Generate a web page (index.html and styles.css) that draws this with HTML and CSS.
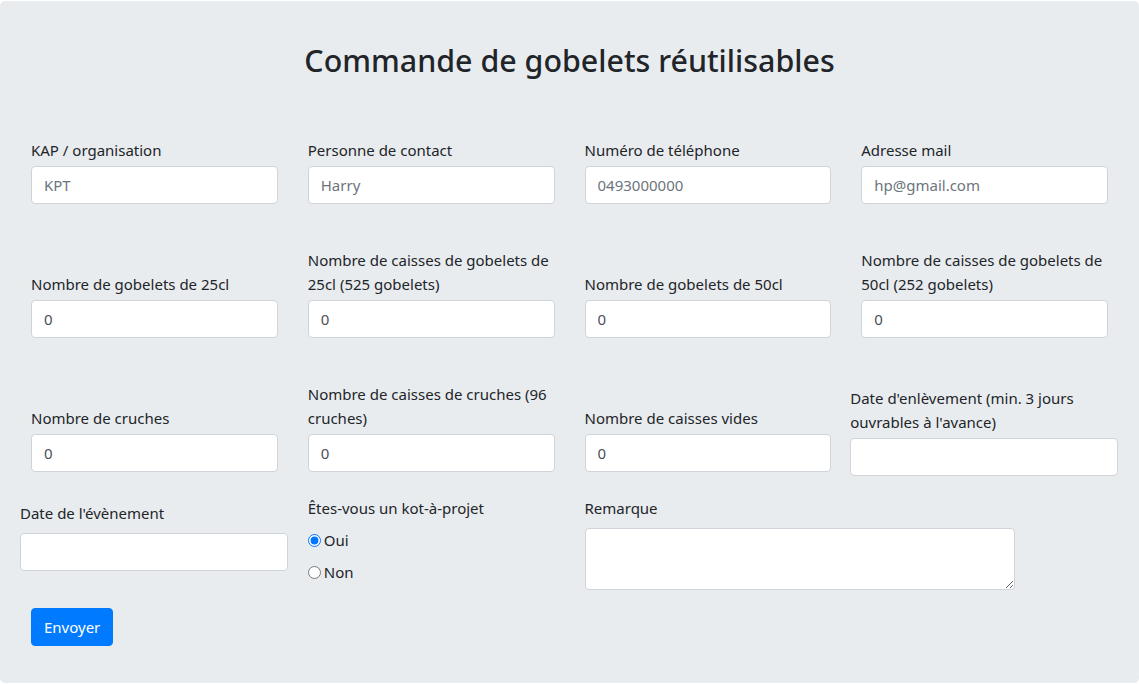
FILE: index.html
```html
<!DOCTYPE html>
<html lang="fr">
<head>
<meta charset="utf-8">
<title>Commande de gobelets réutilisables</title>
<link rel="stylesheet" href="styles.css">
</head>
<body>
<div class="jumbotron">
  <h2 class="title">Commande de gobelets réutilisables</h2>
  <form class="form">
    <div class="row row-first">
      <div class="col">
        <label class="lbl">KAP / organisation</label>
        <input class="ctrl" type="text" placeholder="KPT">
      </div>
      <div class="col">
        <label class="lbl">Personne de contact</label>
        <input class="ctrl" type="text" placeholder="Harry">
      </div>
      <div class="col">
        <label class="lbl">Numéro de téléphone</label>
        <input class="ctrl" type="text" placeholder="0493000000">
      </div>
      <div class="col">
        <label class="lbl">Adresse mail</label>
        <input class="ctrl" type="text" placeholder="hp@gmail.com">
      </div>
    </div>
    <div class="row">
      <div class="col">
        <label class="lbl">Nombre de gobelets de 25cl</label>
        <input class="ctrl" type="text" value="0">
      </div>
      <div class="col">
        <label class="lbl">Nombre de caisses de gobelets de 25cl (525 gobelets)</label>
        <input class="ctrl" type="text" value="0">
      </div>
      <div class="col">
        <label class="lbl">Nombre de gobelets de 50cl</label>
        <input class="ctrl" type="text" value="0">
      </div>
      <div class="col">
        <label class="lbl">Nombre de caisses de gobelets de 50cl (252 gobelets)</label>
        <input class="ctrl" type="text" value="0">
      </div>
    </div>
    <div class="row">
      <div class="col">
        <label class="lbl">Nombre de cruches</label>
        <input class="ctrl" type="text" value="0">
      </div>
      <div class="col">
        <label class="lbl">Nombre de caisses de cruches (96 cruches)</label>
        <input class="ctrl" type="text" value="0">
      </div>
      <div class="col">
        <label class="lbl">Nombre de caisses vides</label>
        <input class="ctrl" type="text" value="0">
      </div>
      <div class="col col-tight col-drop">
        <label class="lbl">Date d'enlèvement (min. 3 jours ouvrables à l'avance)</label>
        <input class="ctrl" type="text">
      </div>
    </div>
    <div class="row row-last">
      <div class="col col-tight col-shift">
        <label class="lbl lbl-wide">Date de l'évènement</label>
        <input class="ctrl" type="text">
      </div>
      <div class="col">
        <label class="lbl lbl-wide">Êtes-vous un kot-à-projet</label>
        <label class="radio-line"><input class="radio" type="radio" name="kap" checked>Oui</label>
        <label class="radio-line"><input class="radio" type="radio" name="kap">Non</label>
      </div>
      <div class="col col-span2">
        <label class="lbl lbl-wide">Remarque</label>
        <textarea class="ctrl area" rows="2"></textarea>
      </div>
    </div>
    <div class="actions">
      <button class="btn" type="button">Envoyer</button>
    </div>
  </form>
</div>
</body>
</html>
```

FILE: styles.css
```css
* { box-sizing: border-box; }

html, body {
  margin: 0;
  padding: 0;
  background: #ffffff;
}

body {
  font-family: "Noto Sans", "Open Sans", sans-serif;
  font-size: 15px;
  line-height: 24px;
  color: #212529;
  padding-top: 1px;
}

.jumbotron {
  background: #e9ecef;
  border-radius: 5px;
  padding: 41px 16px 37px 16px;
  height: 682px;
}

.title {
  margin: 0;
  text-align: center;
  font-size: 30.4px;
  line-height: 38px;
  font-weight: 500;
  color: #212529;
}

.form {
  margin-top: 58px;
}

.row {
  display: grid;
  grid-template-columns: repeat(4, 1fr);
  align-items: end;
  margin-top: 44px;
}

.row-first {
  margin-top: 0;
}

.row-last {
  align-items: start;
  margin-top: 24px;
}

.col {
  padding: 0 15px;
  display: flex;
  flex-direction: column;
  min-width: 0;
}

.col-tight {
  padding: 0 5px 0 4px;
}

.col-drop {
  margin-bottom: -4px;
}

.col-shift {
  margin-top: 5px;
}

.col-span2 {
  grid-column: span 2;
}

.lbl {
  display: block;
  margin-bottom: 4px;
  font-size: 15px;
  line-height: 24px;
}

.lbl-wide {
  margin-bottom: 8px;
}

.ctrl {
  display: block;
  width: 100%;
  height: 38px;
  padding: 6px 12px;
  font-family: inherit;
  font-size: 15px;
  line-height: 24px;
  color: #495057;
  background: #ffffff;
  border: 1px solid #ced4da;
  border-radius: 4px;
  outline: none;
}

.ctrl::placeholder {
  color: #6c757d;
  opacity: 1;
}

.area {
  width: 430px;
  height: 62px;
  resize: vertical;
}

.radio-line {
  display: flex;
  align-items: center;
  height: 24px;
  margin-bottom: 8px;
  font-size: 15px;
}

.radio {
  width: 13px;
  height: 13px;
  margin: 0 3px 0 0;
  accent-color: #0075ff;
}

.actions {
  margin-top: 16px;
  padding: 0 15px;
}

.btn {
  font-family: inherit;
  font-size: 15px;
  line-height: 24px;
  padding: 6px 12px;
  color: #ffffff;
  background: #007bff;
  border: 1px solid #007bff;
  border-radius: 4px;
}
```
